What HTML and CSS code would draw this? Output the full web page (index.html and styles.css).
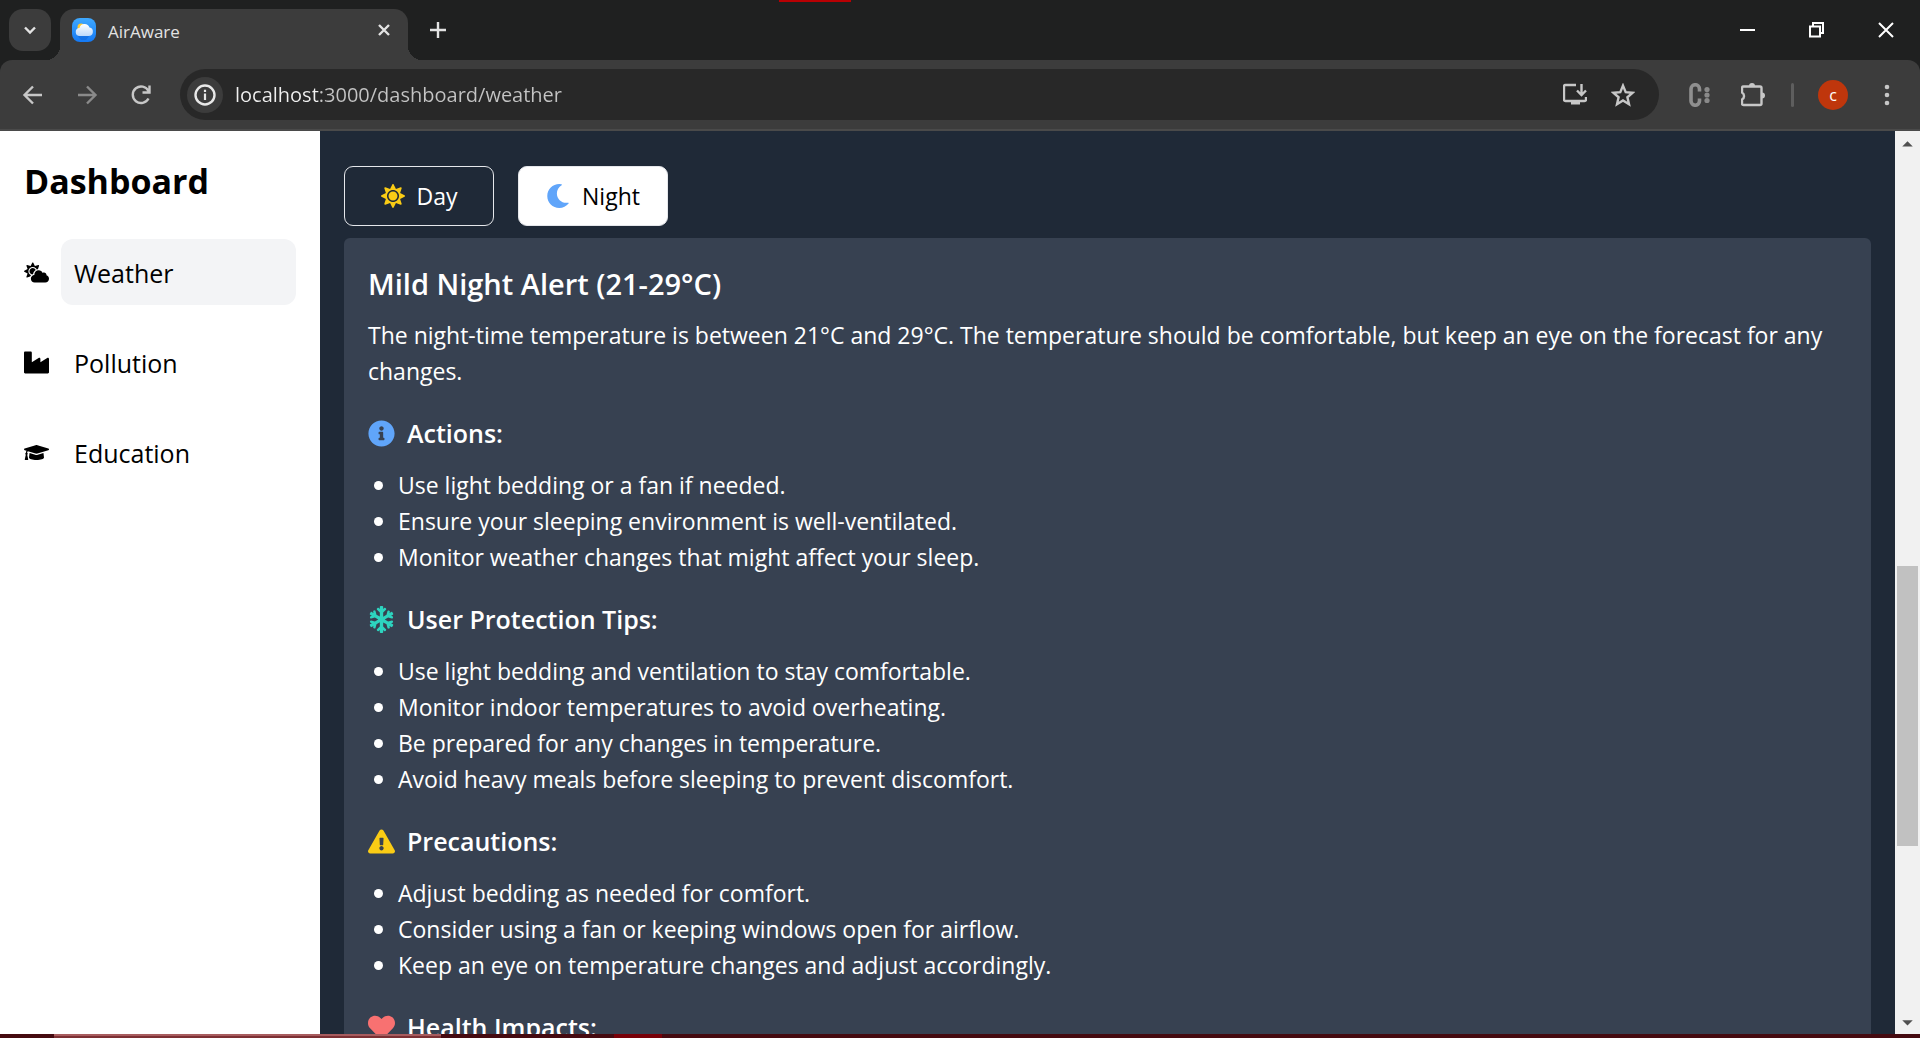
FILE: index.html
```html
<!DOCTYPE html>
<html lang="en">
<head>
<meta charset="utf-8">
<title>AirAware</title>
<link rel="stylesheet" href="styles.css">
</head>
<body>
<div class="window">
  <header class="browser">
    <div class="tabstrip">
      <button class="tab-search" aria-label="Search tabs"><svg class="icon-sm" viewBox="0 0 18 18"><path class="line" d="M4 6.500l5 5 5-5"/></svg></button>
      <div class="tab">
        <svg class="favicon" viewBox="0 0 24 24">
          <defs><linearGradient id="sky" x1="0" y1="0" x2="0" y2="1"><stop offset="0" stop-color="#3fa9ff"/><stop offset="1" stop-color="#1479f5"/></linearGradient>
          <linearGradient id="cloud" x1="0" y1="0" x2="0" y2="1"><stop offset="0" stop-color="#ffffff"/><stop offset="1" stop-color="#bcd9fb"/></linearGradient></defs>
          <rect width="24" height="24" rx="8" fill="url(#sky)"/>
          <path d="M5 17h13l-4 5H9z" fill="#0c62d6" opacity=".5"/>
          <circle cx="9" cy="9" r="3.500" fill="#ffc933"/>
          <path d="M8 18a4 4 0 0 1-.5-8 5.200 5.200 0 0 1 10-.5A4.300 4.300 0 0 1 16.500 18z" fill="url(#cloud)"/>
        </svg>
        <span class="tab-title">AirAware</span>
        <button class="plain" aria-label="Close tab"><svg class="icon-sm" viewBox="0 0 18 18"><path class="line" d="M4 4l10 10M14 4L4 14"/></svg></button>
      </div>
      <button class="plain new-tab" aria-label="New tab"><svg class="icon-sm" viewBox="0 0 18 18"><path class="line" d="M9 1v16M1 9h16"/></svg></button>
      <div class="window-controls">
        <button class="plain" aria-label="Minimize"><svg class="icon-win" viewBox="0 0 16 16"><path d="M0 7h15v2H0z"/></svg></button>
        <button class="plain" aria-label="Restore"><svg class="icon-win" viewBox="0 0 16 16"><path class="thin" d="M1 4.500h10v10H1zM4 4V1h10v10h-3"/></svg></button>
        <button class="plain" aria-label="Close"><svg class="icon-win" viewBox="0 0 16 16"><path class="thin" d="M1 1l14 14M15 1L1 15"/></svg></button>
      </div>
      <span class="strip-mark"></span>
    </div>
    <div class="toolbar">
      <button class="plain" aria-label="Back"><svg class="icon" viewBox="0 0 24 24"><path class="line" d="M21 12H4M12 3.500L3.500 12l8.500 8.500"/></svg></button>
      <button class="plain dim" aria-label="Forward"><svg class="icon" viewBox="0 0 24 24"><path class="line" d="M3 12h17M12 3.500l8.500 8.500-8.500 8.500"/></svg></button>
      <button class="plain" aria-label="Reload"><svg class="icon" viewBox="0 0 24 24"><path class="line" d="M19.500 15.500A8.300 8.300 0 1 1 19.500 8M20.500 2.500v7h-7"/></svg></button>
      <div class="address">
        <button class="site-info" aria-label="Site information"><svg class="icon" viewBox="0 0 24 24"><circle class="line" cx="12" cy="12" r="9.500"/><path d="M10.900 10.500h2.200v6.500h-2.200zM10.900 6.800h2.200v2.200h-2.200z"/></svg></button>
        <input class="url" type="text" aria-label="Address" value="localhost:3000/dashboard/weather">
        <button class="plain" aria-label="Install app"><svg class="icon" viewBox="0 0 24 24"><path class="line" d="M13 2H2.500Q1 2 1 3.500v13Q1 18 2.500 18h19q1.500 0 1.500-1.500V14M18.500 1v10M14 7.500l4.500 4.500L23 7.500"/><path d="M8 18h9v3.500H8z"/></svg></button>
        <button class="plain" aria-label="Bookmark"><svg class="icon" viewBox="0 0 24 24"><path class="line" d="M12 2.600l2.700 6.500 7 .6-5.300 4.600 1.600 6.900-6-3.700-6 3.700 1.600-6.900-5.300-4.600 7-.6z"/></svg></button>
      </div>
      <button class="plain dim" aria-label="Extension"><svg class="icon" viewBox="0 0 24 24"><path d="M12.500 8.500V6a4.200 4.200 0 0 0-8.500 0v12a4.200 4.200 0 0 0 8.500 0V15.500" fill="none" stroke="#8f8f8f" stroke-width="3.600"/><circle cx="20" cy="6.500" r="2.600"/><circle cx="20" cy="12" r="2.600"/><circle cx="20" cy="17.500" r="2.600"/></svg></button>
      <button class="plain" aria-label="Extensions"><svg class="icon" viewBox="0 0 24 24"><path class="line" d="M2.500 3.500H19Q20.500 3.500 20.500 5V20.500Q20.500 22 19 22H2.500Q1 22 1 20.500V16.500a4 4 0 0 0 0-7V5Q1 3.500 2.500 3.500z"/><path d="M8 3a3 3 0 0 1 6 0zM21 9.500a3 3 0 0 1 0 6z"/></svg></button>
      <span class="divider"></span>
      <button class="avatar" aria-label="Profile">c</button>
      <button class="plain" aria-label="Menu"><svg class="icon" viewBox="0 0 24 24"><circle cx="12" cy="4" r="2.300"/><circle cx="12" cy="12" r="2.300"/><circle cx="12" cy="20" r="2.300"/></svg></button>
    </div>
  </header>

  <div class="page">
    <nav class="sidebar">
      <h1 class="brand">Dashboard</h1>
      <div class="nav-row">
        <svg class="nav-icon" viewBox="0 0 640 512"><path d="M575.200 325.700c.2-1.900.8-3.700.8-5.600 0-35.300-28.700-64-64-64-12.600 0-24.200 3.800-34.100 10-17.600-38.800-56.500-66-101.900-66-61.800 0-112 50.100-112 112 0 3 .7 5.800.9 8.700-49.600 3.700-88.900 44.700-88.900 95.300 0 53 43 96 96 96h272c53 0 96-43 96-96 0-42.100-27.200-77.400-64.800-90.400zm-430.400-22.600c-43.700-43.700-43.700-114.700 0-158.300 43.700-43.700 114.700-43.700 158.400 0 9.700 9.700 16.900 20.900 22.300 32.700 9.800-3.700 20.100-6 30.700-7.500L386 81.100c4-11.900-7.300-23.100-19.200-19.200L279 91.200 237.500 8.400C232-2.800 216-2.800 210.400 8.400L169 91.200 81.100 61.900C69.300 58 58 69.300 61.900 81.100l29.300 87.800-82.800 41.500c-11.200 5.600-11.200 21.500 0 27.100l82.800 41.400-29.300 87.800c-4 11.900 7.300 23.100 19.200 19.200l76.100-25.300c6.100-12.400 14-23.700 23.600-33.500-13.100-5.400-25.400-13.400-36-24zm-4.800-79.200c0 40.800 29.300 74.800 67.900 82.300 8-4.700 16.300-8.800 25.200-11.700 5.400-44.300 31-82.500 67.400-105C287.300 160.400 258 140 224 140c-46.300 0-84 37.600-84 83.900z"/></svg>
        <a class="nav-link active" href="#weather">Weather</a>
      </div>
      <div class="nav-row">
        <svg class="nav-icon" viewBox="0 0 512 512"><path d="M475.115 163.781L336 252.309v-68.280c0-18.916-20.931-30.399-36.885-20.248L160 252.309V56c0-13.255-10.745-24-24-24H24C10.745 32 0 42.745 0 56v400c0 13.255 10.745 24 24 24h464c13.255 0 24-10.745 24-24V184.029c0-18.917-20.931-30.399-36.885-20.248z"/></svg>
        <a class="nav-link" href="#pollution">Pollution</a>
      </div>
      <div class="nav-row">
        <svg class="nav-icon" viewBox="0 0 640 512"><path d="M622.340 153.200L343.400 67.500c-15.200-4.670-31.600-4.670-46.790 0L17.660 153.200c-23.540 7.230-23.540 38.360 0 45.590l48.630 14.940c-10.670 13.190-17.230 29.280-17.880 46.900C38.780 266.150 32 276.110 32 288c0 10.780 5.680 19.850 13.860 25.650L20.330 428.530C18.110 438.520 25.710 448 35.940 448h56.110c10.240 0 17.840-9.480 15.620-19.470L82.140 313.650C90.320 307.850 96 298.780 96 288c0-11.570-6.470-21.250-15.660-26.870.76-15.020 8.440-28.300 20.690-36.720L296.600 284.500c9.060 2.780 26.440 6.250 46.790 0l278.950-85.700c23.550-7.240 23.550-38.360 0-45.600zM352.790 315.090c-28.530 8.760-52.840 3.920-65.590 0l-145.020-44.550L128 384c0 35.350 85.960 64 192 64s192-28.650 192-64l-14.180-113.470-145.030 44.560z"/></svg>
        <a class="nav-link" href="#education">Education</a>
      </div>
    </nav>

    <main class="content">
      <div class="toggle">
        <button class="mode"><svg class="icon sun" viewBox="0 0 512 512"><path d="M256 160c-52.900 0-96 43.100-96 96s43.100 96 96 96 96-43.100 96-96-43.100-96-96-96zm246.400 80.500l-94.700-47.300 33.500-100.400c4.500-13.600-8.400-26.500-21.900-21.900l-100.400 33.500-47.400-94.800c-6.400-12.800-24.600-12.800-31 0l-47.300 94.700L92.700 70.800c-13.600-4.500-26.500 8.400-21.900 21.900l33.500 100.400-94.700 47.400c-12.800 6.400-12.800 24.600 0 31l94.700 47.300-33.500 100.500c-4.500 13.600 8.400 26.500 21.900 21.900l100.400-33.500 47.300 94.700c6.400 12.800 24.600 12.800 31 0l47.300-94.700 100.400 33.500c13.600 4.500 26.500-8.400 21.900-21.900l-33.500-100.400 94.700-47.300c13-6.500 13-24.700.2-31.100zm-155.900 106c-49.900 49.900-131.100 49.900-181 0-49.900-49.900-49.900-131.100 0-181 49.900-49.900 131.100-49.900 181 0 49.900 49.900 49.900 131.100 0 181z"/></svg>Day</button>
        <button class="mode selected"><svg class="icon moon" viewBox="0 0 512 512"><path d="M283.211 512c78.962 0 151.079-35.925 198.857-94.792 7.068-8.708-.639-21.430-11.562-19.350-124.203 23.654-238.262-71.576-238.262-196.954 0-72.222 38.662-138.635 101.498-174.394 9.686-5.512 7.250-20.197-3.756-22.230A258.156 258.156 0 0 0 283.211 0c-141.309 0-256 114.511-256 256 0 141.309 114.511 256 256 256z"/></svg>Night</button>
      </div>
      <article class="card">
        <h2 class="card-title">Mild Night Alert (21-29°C)</h2>
        <p class="summary">The night-time temperature is between 21°C and 29°C. The temperature should be comfortable, but keep an eye on the forecast for any changes.</p>

        <section class="group">
          <h3 class="group-title"><svg class="group-icon info" viewBox="0 0 512 512"><path d="M256 8C119.043 8 8 119.083 8 256c0 136.997 111.043 248 248 248s248-111.003 248-248C504 119.083 392.957 8 256 8zm0 110c23.196 0 42 18.804 42 42s-18.804 42-42 42-42-18.804-42-42 18.804-42 42-42zm56 254c0 6.627-5.373 12-12 12h-88c-6.627 0-12-5.373-12-12v-24c0-6.627 5.373-12 12-12h12v-64h-12c-6.627 0-12-5.373-12-12v-24c0-6.627 5.373-12 12-12h64c6.627 0 12 5.373 12 12v100h12c6.627 0 12 5.373 12 12v24z"/></svg>Actions:</h3>
          <ul class="list">
            <li>Use light bedding or a fan if needed.</li>
            <li>Ensure your sleeping environment is well-ventilated.</li>
            <li>Monitor weather changes that might affect your sleep.</li>
          </ul>
        </section>

        <section class="group">
          <h3 class="group-title"><svg class="group-icon snow" viewBox="0 0 448 512"><path d="M440.300 345.200l-33.800-19.500 26-7c8.200-2.200 13.100-10.700 10.900-18.900l-4-14.900c-2.200-8.200-10.700-13.100-18.900-10.900l-70.800 19-63.900-37 63.800-36.900 70.800 19c8.200 2.200 16.700-2.700 18.900-10.900l4-14.900c2.200-8.200-2.700-16.700-10.900-18.900l-26-7 33.800-19.500c7.400-4.300 9.900-13.700 5.700-21.100L430.400 119c-4.200-7.400-13.700-9.900-21.100-5.700l-33.800 19.500 7-26c2.200-8.200-2.700-16.700-10.900-18.900l-14.900-4c-8.200-2.200-16.700 2.700-18.900 10.900l-19 70.800-62.800 36.200v-77.500l53.700-53.100c6.200-6.200 6.200-16.400 0-22.600l-11.300-11.300c-6.200-6.200-16.400-6.200-22.600 0L256 56.400V16c0-8.800-7.200-16-16-16h-32c-8.800 0-16 7.200-16 16v40.400l-19.700-19.700c-6.200-6.200-16.400-6.200-22.600 0L138.300 48c-6.300 6.200-6.300 16.400 0 22.600l53.700 53.100v77.500l-62.800-36.200-19-70.800c-2.200-8.200-10.700-13.100-18.900-10.900l-14.900 4c-8.200 2.200-13.100 10.700-10.900 18.900l7 26-33.800-19.500c-7.400-4.300-16.800-1.700-21.100 5.700L2.100 145.700c-4.200 7.400-1.700 16.800 5.700 21.100l33.800 19.500-26 7c-8.300 2.200-13.200 10.700-11 19l4 14.900c2.200 8.200 10.700 13.100 18.900 10.900l70.800-19 63.800 36.900-63.800 36.900-70.800-19c-8.200-2.200-16.700 2.700-18.900 10.900l-4 14.900c-2.200 8.200 2.700 16.700 10.900 18.900l26 7-33.800 19.600c-7.400 4.300-9.900 13.700-5.700 21.100l15.500 26.800c4.200 7.400 13.700 9.900 21.100 5.700l33.800-19.500-7 26c-2.200 8.200 2.700 16.700 10.900 18.900l14.900 4c8.200 2.200 16.700-2.700 18.900-10.900l19-70.800 62.800-36.200v77.500l-53.700 53.100c-6.300 6.200-6.300 16.400 0 22.600l11.300 11.300c6.200 6.200 16.400 6.200 22.600 0l19.700-19.700V496c0 8.800 7.200 16 16 16h32c8.800 0 16-7.200 16-16v-40.400l19.700 19.700c6.200 6.200 16.400 6.200 22.600 0l11.300-11.300c6.200-6.200 6.200-16.400 0-22.600L256 388.300v-77.500l62.800 36.200 19 70.800c2.200 8.200 10.700 13.100 18.900 10.900l14.900-4c8.200-2.200 13.100-10.700 10.900-18.900l-7-26 33.800 19.500c7.400 4.300 16.800 1.700 21.100-5.700l15.500-26.800c4.300-7.300 1.800-16.800-5.600-21z"/></svg>User Protection Tips:</h3>
          <ul class="list">
            <li>Use light bedding and ventilation to stay comfortable.</li>
            <li>Monitor indoor temperatures to avoid overheating.</li>
            <li>Be prepared for any changes in temperature.</li>
            <li>Avoid heavy meals before sleeping to prevent discomfort.</li>
          </ul>
        </section>

        <section class="group">
          <h3 class="group-title"><svg class="group-icon warn" viewBox="0 0 576 512"><path d="M569.517 440.013C587.975 472.007 564.806 512 527.940 512H48.054c-36.937 0-59.999-40.055-41.577-71.987L246.423 23.985c18.467-32.009 64.720-31.951 83.154 0l239.940 416.028zM288 354c-25.405 0-46 20.595-46 46s20.595 46 46 46 46-20.595 46-46-20.595-46-46-46zm-43.673-165.346l7.418 136c.347 6.364 5.609 11.346 11.982 11.346h48.546c6.373 0 11.635-4.982 11.982-11.346l7.418-136c.375-6.874-5.098-12.654-11.982-12.654h-63.383c-6.884 0-12.356 5.780-11.981 12.654z"/></svg>Precautions:</h3>
          <ul class="list">
            <li>Adjust bedding as needed for comfort.</li>
            <li>Consider using a fan or keeping windows open for airflow.</li>
            <li>Keep an eye on temperature changes and adjust accordingly.</li>
          </ul>
        </section>

        <section class="group">
          <h3 class="group-title"><svg class="group-icon heart" viewBox="0 0 512 512"><path d="M462.300 62.600C407.500 15.900 326 24.300 275.700 76.200L256 96.500l-19.700-20.300C186.100 24.300 104.500 15.900 49.700 62.600c-62.800 53.600-66.100 149.800-9.900 207.900l193.500 199.800c12.500 12.900 32.800 12.900 45.300 0l193.500-199.800c56.300-58.100 53-154.300-9.800-207.900z"/></svg>Health Impacts:</h3>
        </section>
      </article>
    </main>

    <div class="scrollbar" aria-hidden="true">
      <svg class="scroll-arrow" viewBox="0 0 24 24"><path d="M6 16l6-6 6 6z"/></svg>
      <span class="track-before"></span>
      <span class="thumb"></span>
      <span class="track-after"></span>
      <svg class="scroll-arrow" viewBox="0 0 24 24"><path d="M6 10l6 6 6-6z"/></svg>
    </div>
  </div>

  <footer class="taskbar"><span class="task-open"></span><span class="task-alert"></span></footer>
</div>
</body>
</html>
```

FILE: styles.css
```css
* { box-sizing: border-box; }

body {
  margin: 0;
  font-family: "Open Sans", "Noto Sans", sans-serif;
}

h1, h2, h3, p, ul { margin: 0; padding: 0; }

button, input { font: inherit; border: 0; }
button { padding: 0; color: inherit; cursor: pointer; }
svg { display: block; flex: none; fill: currentColor; }

.window {
  display: flex;
  flex-direction: column;
  height: 100vh;
  overflow: hidden;
}

/* Browser frame */
.browser { color: #c7c7c7; background: #1f2020; flex: none; }

.tabstrip {
  position: relative;
  display: flex;
  height: 60px;
  padding: 9px 0 0 9px;
  color: #e3e3e3;
}

.plain {
  display: grid;
  place-items: center;
  background: none;
}

.icon { width: 24px; height: 24px; }
.icon-sm { width: 18px; height: 18px; }
.icon-win { width: 16px; height: 16px; color: #fff; }
.line { fill: none; stroke: currentColor; stroke-width: 2.4; }
.thin { fill: none; stroke: currentColor; stroke-width: 2; }

.tab-search {
  display: grid;
  place-items: center;
  width: 42px;
  height: 42px;
  border-radius: 14px;
  background: #3c3c3c;
}

.tab {
  position: relative;
  display: flex;
  align-items: center;
  gap: 12px;
  width: 348px;
  margin-left: 9px;
  padding: 0 15px 9px 12px;
  border-radius: 14px 14px 0 0;
  background: #3c3c3c;
}

.tab::before, .tab::after {
  content: "";
  position: absolute;
  bottom: 0;
  width: 14px;
  height: 14px;
}
.tab::before { left: -14px; background: radial-gradient(circle at 0 0, transparent 14px, #3c3c3c 14px); }
.tab::after { right: -14px; background: radial-gradient(circle at 100% 0, transparent 14px, #3c3c3c 14px); }

.favicon { width: 24px; height: 24px; }
.tab-title { flex: 1; padding-top: 3px; font-size: 17px; line-height: 24px; }
.new-tab { width: 60px; height: 42px; }

.window-controls { display: flex; height: 42px; margin-left: auto; }
.window-controls .plain { width: 69px; }

.strip-mark {
  position: absolute;
  top: 0;
  left: 779px;
  width: 72px;
  height: 2px;
  background: #b80003;
}

.toolbar {
  display: flex;
  align-items: center;
  gap: 30px;
  height: 71px;
  padding: 0 21px;
  border-bottom: 2px solid #4a4a4a;
  border-radius: 12px 12px 0 0;
  background: #3c3c3c;
}

.dim { color: #8a8a8a; }

.address {
  display: flex;
  flex: 1;
  align-items: center;
  gap: 24px;
  height: 51px;
  margin: 0 -2px 0 -3px;
  padding: 0 24px 0 7px;
  border-radius: 26px;
  background: #282828;
}

.site-info {
  display: grid;
  place-items: center;
  width: 36px;
  height: 36px;
  border-radius: 50%;
  color: #e8e8e8;
  background: #3c3c3c;
}

.url {
  flex: 1;
  min-width: 0;
  margin-left: -12px;
  padding: 0;
  font-size: 20px;
  line-height: 30px;
  color: transparent;
  background: linear-gradient(90deg, #f0f0f0 84px, #c4c4c4 84px) text;
}

.divider { width: 3px; height: 24px; margin: 0 -6px 0 -4px; border-radius: 2px; background: #5e5e5e; }

.avatar {
  width: 30px;
  height: 30px;
  margin-right: -3px;
  border-radius: 50%;
  font-size: 16px;
  line-height: 28px;
  color: #fff;
  background: #bf360c;
}

/* Page */
.page {
  display: flex;
  flex: 1;
  min-height: 0;
  background: #1f2937;
}

.sidebar {
  display: flex;
  flex: none;
  flex-direction: column;
  gap: 24px;
  width: 320px;
  padding: 24px;
  color: #000;
  background: #fff;
}

.brand { margin-bottom: 8px; font-size: 34px; line-height: 52px; font-weight: 700; }

.nav-row { display: flex; align-items: center; gap: 12px; }
.nav-icon { width: 25px; height: 25px; }

.nav-link {
  flex: 1;
  padding: 13px 13px 11px;
  border-radius: 12px;
  font-size: 25px;
  line-height: 42px;
  color: inherit;
  text-decoration: none;
}
.nav-link.active { background: #f3f4f6; }

.content {
  flex: 1;
  min-width: 0;
  padding: 35px 24px 0;
  overflow: hidden;
  color: #fff;
}

.toggle { display: flex; gap: 24px; margin-bottom: 12px; }

.mode {
  display: flex;
  align-items: center;
  justify-content: center;
  gap: 12px;
  width: 150px;
  height: 60px;
  border: 1px solid #e5e7eb;
  border-radius: 9px;
  font-size: 23px;
  line-height: 38px;
  background: none;
}
.mode.selected { color: #000; background: #fff; }

.card { padding: 25px 24px 24px; border-radius: 6px; background: #374151; }
.card-title { margin-bottom: 12px; font-size: 29px; line-height: 42px; font-weight: 600; }
.summary { font-size: 23px; line-height: 36px; }

.group { margin-top: 23px; }

.group-title {
  display: flex;
  align-items: center;
  gap: 12px;
  margin-bottom: 13px;
  font-size: 25px;
  line-height: 42px;
  font-weight: 600;
}
.group-icon { width: 27px; height: 27px; }

.sun, .warn { color: #facc15; }
.moon, .info { color: #60a5fa; }
.snow { color: #2dd4bf; }
.heart { color: #f87171; }

.list { font-size: 23px; line-height: 36px; list-style: none; }
.list li::before {
  content: "";
  display: inline-block;
  width: 9px;
  height: 9px;
  margin: 0 15px 4px 6px;
  border-radius: 50%;
  background: currentColor;
}

.scrollbar {
  display: flex;
  flex: none;
  flex-direction: column;
  width: 25px;
  padding: 0 2px;
  color: #505050;
  background: #f1f1f1;
}
.scroll-arrow { width: 21px; height: 24px; }
.track-before { flex: 411; }
.thumb { flex: 280; background: #c1c1c1; }
.track-after { flex: 164; }

.taskbar { display: flex; flex: none; height: 4px; background: #450a10; }
.task-open { width: 387px; margin-left: 54px; border-top: 2px solid #a85c5e; background: #7c3034; }
.task-alert { width: 48px; margin-left: 173px; background: #780008; }
```
